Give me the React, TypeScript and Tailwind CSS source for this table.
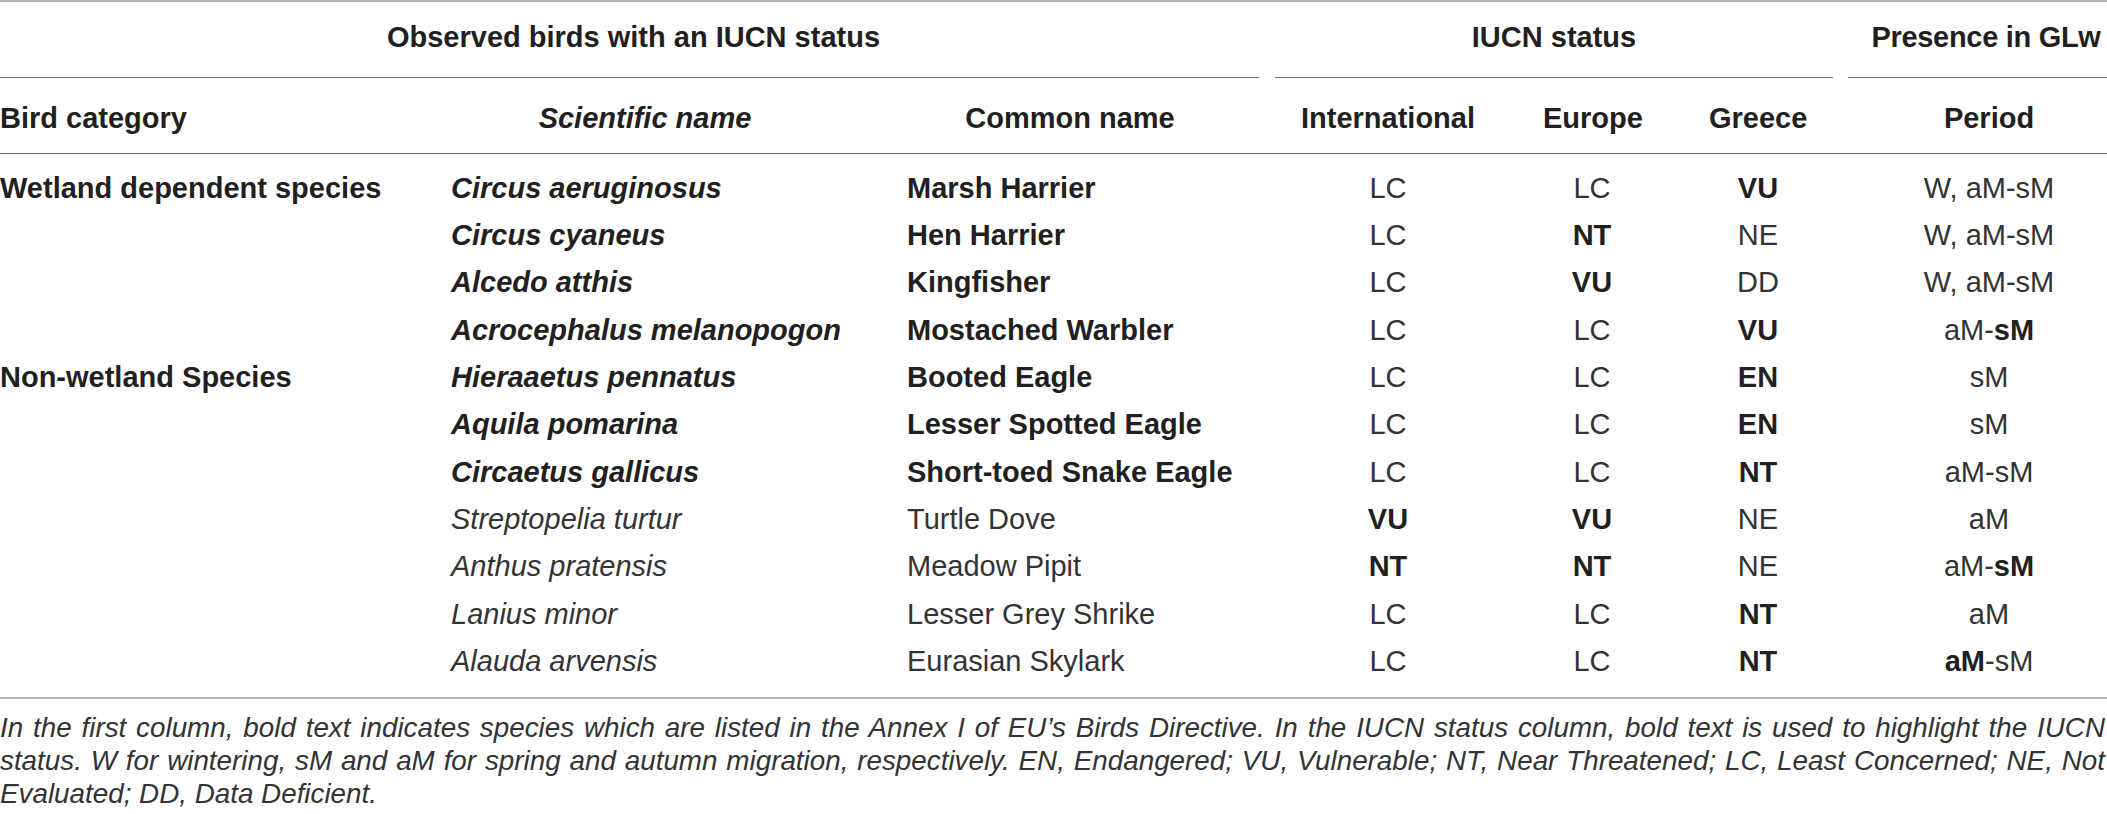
import React from "react";

type Cell = { text: string; bold?: boolean } | { parts: { text: string; bold?: boolean }[] };

type Row = {
  category: string;
  sci: string;
  common: string;
  listed: boolean;
  intl: Cell;
  europe: Cell;
  greece: Cell;
  period: Cell;
};

const rows: Row[] = [
  {
    category: "Wetland dependent species",
    sci: "Circus aeruginosus",
    common: "Marsh Harrier",
    listed: true,
    intl: { text: "LC" },
    europe: { text: "LC" },
    greece: { text: "VU", bold: true },
    period: { text: "W, aM-sM" },
  },
  {
    category: "",
    sci: "Circus cyaneus",
    common: "Hen Harrier",
    listed: true,
    intl: { text: "LC" },
    europe: { text: "NT", bold: true },
    greece: { text: "NE" },
    period: { text: "W, aM-sM" },
  },
  {
    category: "",
    sci: "Alcedo atthis",
    common: "Kingfisher",
    listed: true,
    intl: { text: "LC" },
    europe: { text: "VU", bold: true },
    greece: { text: "DD" },
    period: { text: "W, aM-sM" },
  },
  {
    category: "",
    sci: "Acrocephalus melanopogon",
    common: "Mostached Warbler",
    listed: true,
    intl: { text: "LC" },
    europe: { text: "LC" },
    greece: { text: "VU", bold: true },
    period: { parts: [{ text: "aM-" }, { text: "sM", bold: true }] },
  },
  {
    category: "Non-wetland Species",
    sci: "Hieraaetus pennatus",
    common: "Booted Eagle",
    listed: true,
    intl: { text: "LC" },
    europe: { text: "LC" },
    greece: { text: "EN", bold: true },
    period: { text: "sM" },
  },
  {
    category: "",
    sci: "Aquila pomarina",
    common: "Lesser Spotted Eagle",
    listed: true,
    intl: { text: "LC" },
    europe: { text: "LC" },
    greece: { text: "EN", bold: true },
    period: { text: "sM" },
  },
  {
    category: "",
    sci: "Circaetus gallicus",
    common: "Short-toed Snake Eagle",
    listed: true,
    intl: { text: "LC" },
    europe: { text: "LC" },
    greece: { text: "NT", bold: true },
    period: { text: "aM-sM" },
  },
  {
    category: "",
    sci: "Streptopelia turtur",
    common: "Turtle Dove",
    listed: false,
    intl: { text: "VU", bold: true },
    europe: { text: "VU", bold: true },
    greece: { text: "NE" },
    period: { text: "aM" },
  },
  {
    category: "",
    sci: "Anthus pratensis",
    common: "Meadow Pipit",
    listed: false,
    intl: { text: "NT", bold: true },
    europe: { text: "NT", bold: true },
    greece: { text: "NE" },
    period: { parts: [{ text: "aM-" }, { text: "sM", bold: true }] },
  },
  {
    category: "",
    sci: "Lanius minor",
    common: "Lesser Grey Shrike",
    listed: false,
    intl: { text: "LC" },
    europe: { text: "LC" },
    greece: { text: "NT", bold: true },
    period: { text: "aM" },
  },
  {
    category: "",
    sci: "Alauda arvensis",
    common: "Eurasian Skylark",
    listed: false,
    intl: { text: "LC" },
    europe: { text: "LC" },
    greece: { text: "NT", bold: true },
    period: { parts: [{ text: "aM", bold: true }, { text: "-sM" }] },
  },
];

const cols = "grid grid-cols-[417px_456px_394px_242px_166px_166px_296px]";

function Value({ cell }: { cell: Cell }) {
  if ("parts" in cell) {
    return (
      <span>
        {cell.parts.map((p, i) => (
          <span key={i} className={p.bold ? "font-bold text-[#231f20]" : "font-normal text-[#333]"}>
            {p.text}
          </span>
        ))}
      </span>
    );
  }
  return (
    <span className={cell.bold ? "font-bold text-[#231f20]" : "font-normal text-[#333]"}>{cell.text}</span>
  );
}

export default function App() {
  return (
    <div className="w-[2107px] overflow-hidden bg-white text-[#231f20] font-['Liberation_Sans',Arial,sans-serif]">
      <div className="w-[2137px]">
        <div className="h-[2px] bg-[#b4b4b4]" />

        {/* group headers */}
        <div className={`${cols} text-[29px] font-bold`}>
          <div className="col-span-3 flex flex-col">
            <div className="h-[75px] flex items-center justify-center pb-[4px]">
              Observed birds with an IUCN status
            </div>
            <div className="h-px bg-[#6e6e6e] mr-[8px]" />
          </div>
          <div className="col-span-3 flex flex-col">
            <div className="h-[75px] flex items-center justify-center pb-[4px]">IUCN status</div>
            <div className="h-px bg-[#6e6e6e] mx-[8px]" />
          </div>
          <div className="flex flex-col">
            <div className="h-[75px] flex items-center justify-center pb-[4px] pr-[6px] tracking-[-0.3px] whitespace-nowrap">
              Presence in GLw
            </div>
            <div className="h-px bg-[#6e6e6e] ml-[7px]" />
          </div>
        </div>

        {/* column headers */}
        <div className={`${cols} h-[75px] text-[29px] font-bold items-center pt-[7px]`}>
          <div className="pr-[34px]">Bird category</div>
          <div className="px-[34px] text-center italic">Scientific name</div>
          <div className="px-[34px] text-center">Common name</div>
          <div className="px-[34px] text-center">International</div>
          <div className="px-[34px] text-center">Europe</div>
          <div className="px-[34px] text-center">Greece</div>
          <div className="px-[34px] text-center">Period</div>
        </div>
        <div className="h-px bg-[#6e6e6e]" />

        {/* body */}
        <div className="h-[543px] pt-[11px] text-[29px]">
          {rows.map((r, i) => (
            <div key={i} className={`${cols} h-[47.3px] items-center whitespace-nowrap`}>
              <div className="font-bold pr-[34px]">{r.category}</div>
              <div className={`px-[34px] italic ${r.listed ? "font-bold" : "font-normal text-[#333]"}`}>{r.sci}</div>
              <div className={`px-[34px] ${r.listed ? "font-bold" : "font-normal text-[#333]"}`}>{r.common}</div>
              <div className="px-[34px] text-center">
                <Value cell={r.intl} />
              </div>
              <div className="px-[34px] text-center">
                <Value cell={r.europe} />
              </div>
              <div className="px-[34px] text-center">
                <Value cell={r.greece} />
              </div>
              <div className="px-[34px] text-center">
                <Value cell={r.period} />
              </div>
            </div>
          ))}
        </div>
        <div className="h-[2px] bg-[#b4b4b4]" />
      </div>

      {/* footnote, justified like the journal layout */}
      <div className="w-[2105px] pt-[12px] text-[27.8px] leading-[33px] italic text-[#333]">
        <p className="text-justify [text-align-last:justify] whitespace-nowrap">
          In the first column, bold text indicates species which are listed in the Annex I of EU’s Birds Directive. In
          the IUCN status column, bold text is used to highlight the IUCN
        </p>
        <p className="text-justify [text-align-last:justify] whitespace-nowrap">
          status. W for wintering, sM and aM for spring and autumn migration, respectively. EN, Endangered; VU,
          Vulnerable; NT, Near Threatened; LC, Least Concerned; NE, Not
        </p>
        <p>Evaluated; DD, Data Deficient.</p>
      </div>
    </div>
  );
}
